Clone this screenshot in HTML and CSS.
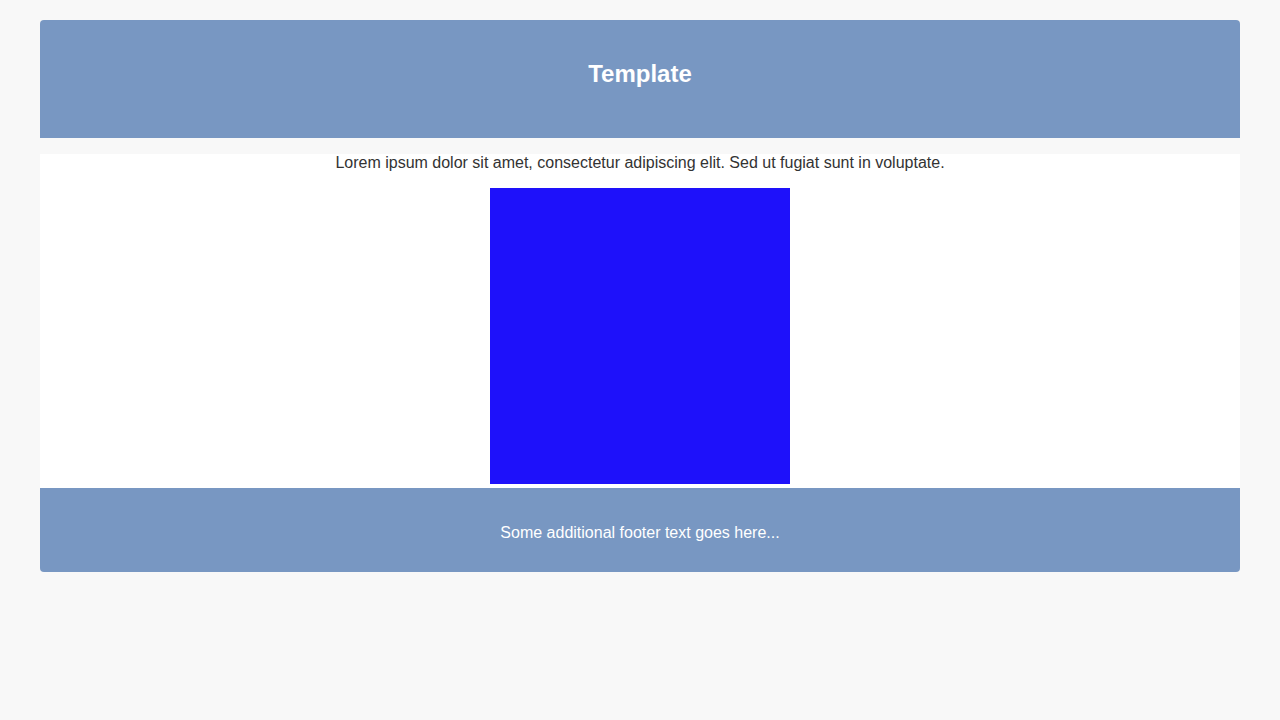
FILE: index.html
```html
<!DOCTYPE html>
<html lang="en">
<head>
<meta charset="utf-8">
<title>Template</title>
<link rel="stylesheet" href="styles.css">
</head>
<body>
<div class="page">
  <header class="header">
    <h1 class="title">Template</h1>
  </header>
  <main class="content">
    <p class="lead">Lorem ipsum dolor sit amet, consectetur adipiscing elit. Sed ut fugiat sunt in voluptate.</p>
    <div class="square"></div>
  </main>
  <footer class="footer">
    <p class="footer-text">Some additional footer text goes here...</p>
  </footer>
</div>
</body>
</html>
```
FILE: styles.css
```css
html, body {
  margin: 0;
  padding: 0;
  background: #f8f8f8;
  font-family: "Liberation Sans", Arial, sans-serif;
  color: #333333;
}
.page {
  margin: 20px 40px 0;
  display: flex;
  flex-direction: column;
}
.header {
  background: #7897c2;
  border-radius: 4px 4px 0 0;
  padding: 40px 16px 50px;
  text-align: center;
}
.title {
  margin: 0;
  font-size: 24px;
  line-height: 28px;
  font-weight: bold;
  color: #ffffff;
}
.content {
  margin-top: 16px;
  background: #ffffff;
  display: flex;
  flex-direction: column;
  align-items: center;
}
.lead {
  margin: 0;
  font-size: 16px;
  line-height: 18px;
  text-align: center;
}
.square {
  margin: 16px 0 4px;
  width: 300px;
  height: 296px;
  background: #1e11fa;
}
.footer {
  background: #7897c2;
  border-radius: 0 0 4px 4px;
  padding: 36px 16px 30px;
  text-align: center;
}
.footer-text {
  margin: 0;
  font-size: 16px;
  line-height: 18px;
  color: #ffffff;
}
```
